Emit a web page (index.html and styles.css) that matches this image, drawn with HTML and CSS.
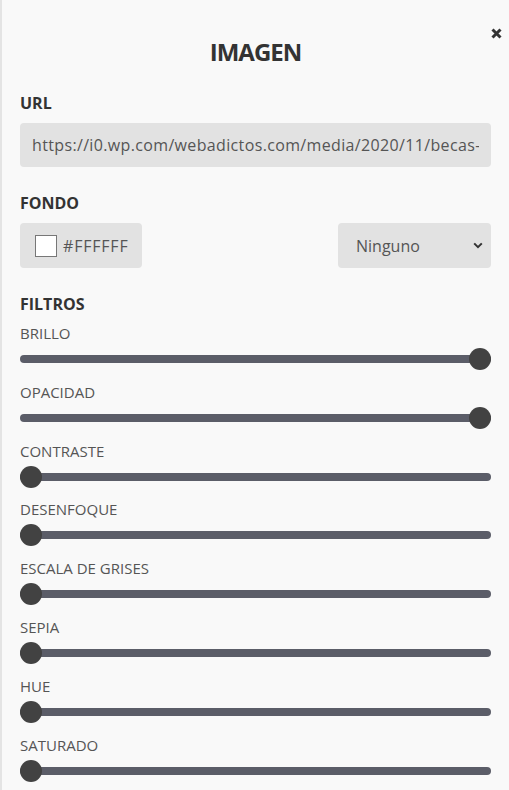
FILE: index.html
```html
<!DOCTYPE html>
<html lang="es">
<head>
<meta charset="utf-8">
<link rel="stylesheet" href="styles.css">
</head>
<body>
<div class="panel">
  <button class="close" aria-label="Cerrar">
    <svg width="11" height="11" viewBox="0 0 11 11"><path d="M1.5 1.5 L9.5 9.5 M9.5 1.5 L1.5 9.5" stroke="#333" stroke-width="3" stroke-linecap="butt"/></svg>
  </button>
  <h1 class="title">IMAGEN</h1>

  <div class="section">
    <div class="label">URL</div>
    <input class="field url" type="text" readonly value="https://i0.wp.com/webadictos.com/media/2020/11/becas-google-2021.jpg">
  </div>

  <div class="section">
    <div class="label">FONDO</div>
    <div class="row">
      <div class="field color">
        <span class="swatch"></span>
        <span class="hex">#FFFFFF</span>
      </div>
      <div class="select">
        <span>Ninguno</span>
        <svg class="chev" width="10" height="7" viewBox="0 0 10 7"><path d="M1.2 1.4 L5 5.2 L8.8 1.4" fill="none" stroke="#333" stroke-width="2"/></svg>
      </div>
    </div>
  </div>

  <div class="section filters">
    <div class="label">FILTROS</div>
    <div class="filter"><div class="flabel">BRILLO</div><input class="range" type="range" min="0" max="100" value="100"></div>
    <div class="filter"><div class="flabel">OPACIDAD</div><input class="range" type="range" min="0" max="100" value="100"></div>
    <div class="filter"><div class="flabel">CONTRASTE</div><input class="range" type="range" min="0" max="100" value="0"></div>
    <div class="filter"><div class="flabel">DESENFOQUE</div><input class="range" type="range" min="0" max="100" value="0"></div>
    <div class="filter"><div class="flabel">ESCALA DE GRISES</div><input class="range" type="range" min="0" max="100" value="0"></div>
    <div class="filter"><div class="flabel">SEPIA</div><input class="range" type="range" min="0" max="100" value="0"></div>
    <div class="filter"><div class="flabel">HUE</div><input class="range" type="range" min="0" max="100" value="0"></div>
    <div class="filter"><div class="flabel">SATURADO</div><input class="range" type="range" min="0" max="100" value="0"></div>
  </div>
</div>
</body>
</html>
```

FILE: styles.css
```css
html, body {
  margin: 0;
  padding: 0;
  background: #f9f9f9;
  height: 100%;
  overflow: hidden;
}
body {
  font-family: "Open Sans", "Liberation Sans", sans-serif;
  color: #333;
}
.panel {
  position: relative;
  box-sizing: border-box;
  min-height: 790px;
  border-left: 2px solid #e4e4e4;
  padding: 37px 18px 0 18px;
}
.close {
  position: absolute;
  top: 28px;
  right: 7px;
  width: 11px;
  height: 11px;
  padding: 0;
  border: 0;
  background: transparent;
  display: block;
}
.close svg { display: block; }
.title {
  margin: 0 0 25px;
  font-size: 24px;
  line-height: 30px;
  font-weight: 700;
  letter-spacing: -1px;
  text-align: center;
  color: #333;
}
.section { margin-bottom: 25px; }
.label {
  font-size: 16px;
  line-height: 20px;
  padding-top: 1px;
  font-weight: 700;
  color: #333;
  margin-bottom: 10px;
}
.field {
  background: #e2e2e2;
  border-radius: 4px;
  box-sizing: border-box;
  color: #555;
  font-size: 16px;
}
.url {
  display: block;
  width: 100%;
  height: 44px;
  margin: 0;
  border: 0;
  outline: none;
  padding: 0 12px;
  font-family: inherit;
  letter-spacing: 0.35px;
}
.row {
  display: flex;
  justify-content: space-between;
  align-items: center;
}
.color {
  display: flex;
  align-items: center;
  gap: 6px;
  width: 122px;
  height: 45px;
  padding: 0 15px;
}
.hex { letter-spacing: 0.8px; }
.swatch {
  flex: none;
  width: 22px;
  height: 22px;
  box-sizing: border-box;
  background: #fff;
  border: 1px solid #777;
}
.select {
  display: flex;
  align-items: center;
  justify-content: space-between;
  box-sizing: border-box;
  width: 153px;
  height: 45px;
  padding: 0 8px 0 18px;
  background: #e2e2e2;
  border-radius: 4px;
  color: #555;
  font-size: 16px;
}
.chev { display: block; }
.filters .label { margin-bottom: 9px; }
.filter { margin-bottom: 11.8px; }
.flabel {
  font-size: 15px;
  line-height: 20px;
  color: #555;
}
.range {
  -webkit-appearance: none;
  appearance: none;
  display: block;
  width: 100%;
  margin: 5px 0 0;
  height: 22px;
  background: transparent;
  padding: 0;
}
.range::-webkit-slider-runnable-track {
  height: 8px;
  border-radius: 4px;
  background: #5b5d68;
}
.range::-webkit-slider-thumb {
  -webkit-appearance: none;
  appearance: none;
  width: 22px;
  height: 22px;
  border-radius: 50%;
  background: #424242;
  margin-top: -7px;
  border: 0;
}
.range::-moz-range-track {
  height: 8px;
  border-radius: 4px;
  background: #5b5d68;
}
.range::-moz-range-thumb {
  width: 22px;
  height: 22px;
  border-radius: 50%;
  background: #424242;
  border: 0;
}
```
